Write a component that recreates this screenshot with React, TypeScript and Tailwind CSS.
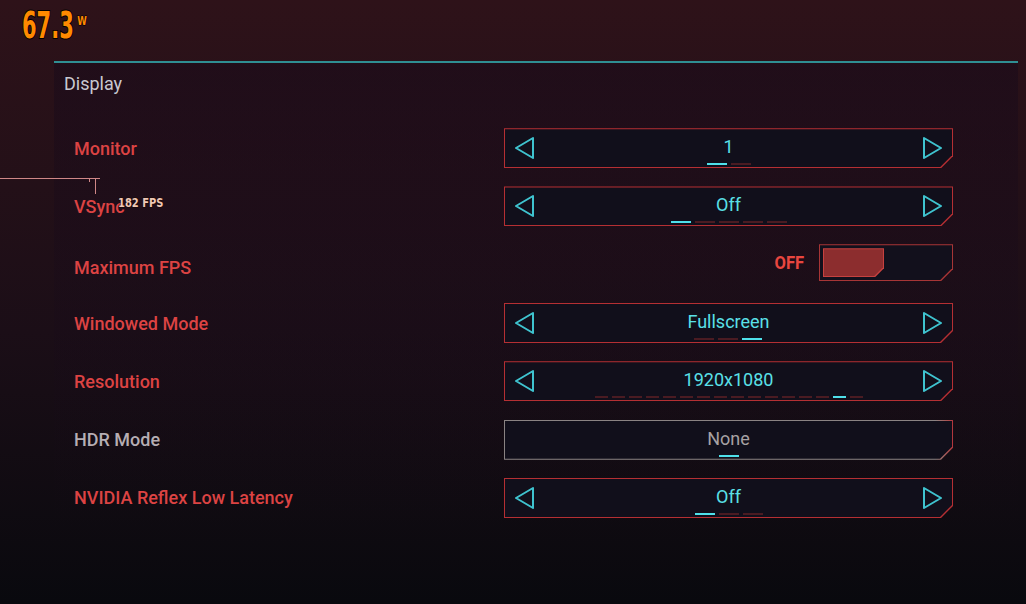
import React from "react";

type Row = {
  label: string;
  kind: "select" | "toggle" | "plain";
  value?: string;
  count?: number;
  active?: number;
  dashW?: number;
  muted?: boolean;
};

const rows: Row[] = [
  { label: "Monitor", kind: "select", value: "1", count: 2, active: 0 },
  { label: "VSync", kind: "select", value: "Off", count: 5, active: 0 },
  { label: "Maximum FPS", kind: "toggle" },
  { label: "Windowed Mode", kind: "select", value: "Fullscreen", count: 3, active: 2 },
  { label: "Resolution", kind: "select", value: "1920x1080", count: 16, active: 14, dashW: 13 },
  { label: "HDR Mode", kind: "plain", value: "None", count: 1, active: 0, muted: true },
  { label: "NVIDIA Reflex Low Latency", kind: "select", value: "Off", count: 3, active: 0 },
];

const cut = "[clip-path:polygon(0_0,100%_0,100%_calc(100%_-_12px),calc(100%_-_12px)_100%,0_100%)]";
const cutSm = "[clip-path:polygon(0_0,100%_0,100%_calc(100%_-_9px),calc(100%_-_9px)_100%,0_100%)]";

const Arrow = ({ dir }: { dir: "left" | "right" }) => (
  <svg width="20" height="24" viewBox="0 0 20 24" className="shrink-0">
    <polygon
      points={dir === "left" ? "18,2 1,12 18,22" : "2,2 19,12 2,22"}
      fill="none"
      stroke="#3fc3cf"
      strokeWidth="2"
      strokeLinejoin="round"
    />
  </svg>
);

const Dashes = ({ count, active, w = 20 }: { count: number; active: number; w?: number }) => (
  <div className="flex gap-[4px]">
    {Array.from({ length: count }).map((_, i) => (
      <div
        key={i}
        className={`h-[2px] ${i === active ? "bg-[#4fe0ea]" : "bg-[#4a1b22]"}`}
        style={{ width: w }}
      />
    ))}
  </div>
);

const Selector = ({ row }: { row: Row }) => (
  <div
    className={`relative w-[449px] h-[40px] ${cut} ${
      row.muted ? "bg-gradient-to-r from-[#8a8383] from-[96%] to-[#b3333b]" : "bg-[#b52f33]"
    }`}
  >
    <div className={`absolute inset-[1px] bg-[#110f1b] ${cut} flex items-center justify-between px-[10px]`}>
      {row.kind === "select" ? <Arrow dir="left" /> : <div />}
      <div className="flex flex-col items-center pt-[5px]">
        <span
          className={`text-[18px] leading-[22px] ${row.muted ? "text-[#a7a1a3]" : "text-[#5ae0e8]"}`}
        >
          {row.value}
        </span>
        <div className="mt-[5px]">
          <Dashes count={row.count ?? 1} active={row.active ?? 0} w={row.dashW} />
        </div>
      </div>
      {row.kind === "select" ? <Arrow dir="right" /> : <div />}
    </div>
  </div>
);

const Toggle = () => (
  <div className="flex items-center gap-[15px] -mt-[4px]">
    <span className="text-[18px] font-bold text-[#e8463f] scale-x-[0.92] origin-right">OFF</span>
    <div className={`relative w-[134px] h-[37px] bg-[#a73536] ${cut}`}>
      <div className={`absolute inset-[1px] bg-[#12101c] ${cut} p-[3px]`}>
        <div className={`w-[61px] h-[29px] bg-[#c6413f] ${cutSm} p-[1px]`}>
          <div className={`w-full h-full bg-[#8c2d2e] ${cutSm}`} />
        </div>
      </div>
    </div>
  </div>
);

export default function App() {
  return (
    <div
      className="relative w-[1026px] h-[604px] overflow-hidden bg-gradient-to-b from-[#2e1219] via-[#1b0e17] via-[55%] to-[#09090e]"
      style={{ fontFamily: "Roboto, 'Noto Sans', sans-serif" }}
    >
      {/* power readout */}
      <div
        className="absolute left-[22px] top-[4px] flex items-start text-[#ff8a00]"
        style={{ fontFamily: "'DejaVu Sans Condensed', 'DejaVu Sans', sans-serif" }}
      >
        <span className="text-[37px] font-bold leading-[44px] origin-left scale-x-[0.63] inline-block [-webkit-text-stroke:2px_#000] [paint-order:stroke_fill]">
          67.3
        </span>
        <span className="absolute left-[54px] top-[8px] text-[12px] font-bold scale-x-[0.8] [-webkit-text-stroke:1px_#000] [paint-order:stroke_fill]">
          W
        </span>
      </div>

      {/* fps overlay */}
      <div className="absolute left-0 top-[178px] w-[100px] h-[1px] bg-[#cf8787]" />
      <div className="absolute left-[89px] top-[178px] w-[1px] h-[4px] bg-[#cf8787]" />
      <div className="absolute left-[95px] top-[178px] w-[1px] h-[16px] bg-[#cf8787]" />
      <div
        className="absolute left-[118px] top-[193px] text-[13px] font-bold text-[#efc8b6] scale-x-[0.85] origin-left [-webkit-text-stroke:1.5px_#1a0a0a] [paint-order:stroke_fill] z-10"
        style={{ fontFamily: "'DejaVu Sans Condensed', sans-serif" }}
      >
        182 FPS
      </div>

      {/* panel */}
      <div className="mt-[61px] ml-[54px] mr-[8px] border-t-2 border-[#2f8f93] bg-gradient-to-b from-[#170a1a]/50 to-transparent">
        <div className="h-[56px] pl-[10px] pt-[7px] text-[18px] text-[#c9c8d0]">Display</div>
        <div className="flex flex-col">
          {rows.map((row) => (
            <div key={row.label} className="h-[58.3px] flex items-center justify-between pl-[20px] pr-[65px]">
              <span
                className={`text-[18px] font-medium ${row.muted ? "text-[#b6aeb3]" : "text-[#dc4343]"} ${
                  row.kind === "toggle" ? "mt-[6px]" : ""
                }`}
              >
                {row.label}
              </span>
              {row.kind === "toggle" ? <Toggle /> : <Selector row={row} />}
            </div>
          ))}
        </div>
      </div>
    </div>
  );
}
